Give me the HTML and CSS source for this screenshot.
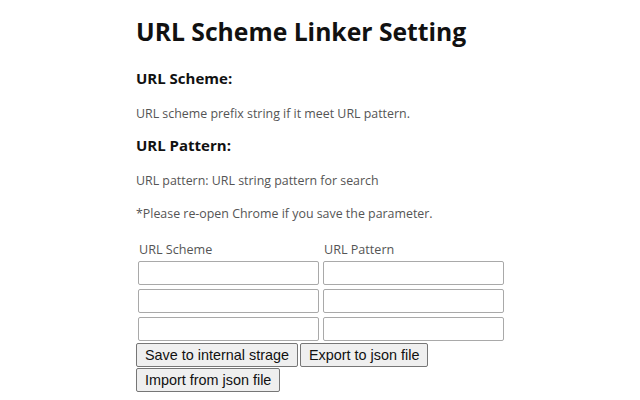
FILE: index.html
```html
<!DOCTYPE html>
<html>
<head>
<meta charset="utf-8">
<link rel="stylesheet" href="styles.css">
</head>
<body>
<div class="container">
  <h1 class="title">URL Scheme Linker Setting</h1>
  <h3 class="section">URL Scheme:</h3>
  <p class="desc first">URL scheme prefix string if it meet URL pattern.</p>
  <h3 class="section">URL Pattern:</h3>
  <p class="desc">URL pattern: URL string pattern for search</p>
  <p class="desc">*Please re-open Chrome if you save the parameter.</p>
  <table class="grid">
    <tr><th class="head">URL Scheme</th><th class="head">URL Pattern</th></tr>
    <tr><td class="cell"><input class="field" type="text"></td><td class="cell"><input class="field" type="text"></td></tr>
    <tr><td class="cell"><input class="field" type="text"></td><td class="cell"><input class="field" type="text"></td></tr>
    <tr><td class="cell"><input class="field" type="text"></td><td class="cell"><input class="field" type="text"></td></tr>
  </table>
  <div class="actions">
    <div class="row">
      <button class="btn">Save to internal strage</button>
      <button class="btn">Export to json file</button>
    </div>
    <div class="row">
      <button class="btn">Import from json file</button>
    </div>
  </div>
</div>
</body>
</html>
```

FILE: styles.css
```css
html, body {
  margin: 0;
  padding: 0;
  background: #ffffff;
}
body {
  font-family: "Open Sans", "Noto Sans", sans-serif;
  font-size: 12.4px;
  color: #555555;
}
.container {
  width: 368px;
  margin: 0 auto;
}
.title {
  font-size: 24.7px;
  font-weight: 700;
  color: #111111;
  margin: 14px 0 18px 0;
  line-height: 36px;
}
.section {
  font-size: 15px;
  font-weight: 700;
  color: #111111;
  margin: 0;
  line-height: 20px;
}
.desc {
  margin: 17px 0 14px 0;
  line-height: 18px;
}
.desc.first {
  margin-bottom: 12px;
}
.desc + .desc {
  margin-top: 15px;
}
.grid {
  border-spacing: 2px;
  margin-left: -1px;
  margin-top: 16px;
}
.head {
  text-align: left;
  font-weight: 400;
  font-size: 12.6px;
  line-height: 17px;
  padding: 0 2px;
  color: #555555;
}
.cell {
  padding: 1px;
}
.field {
  width: 181px;
  height: 24px;
  box-sizing: border-box;
  border: 1px solid #a9a9a9;
  border-radius: 2px;
  margin: 0;
  display: block;
}
.actions {
  display: flex;
  flex-direction: column;
  gap: 1px;
  margin-top: -1px;
}
.row {
  display: flex;
  gap: 2px;
}
.btn {
  font-family: "Liberation Sans", Arial, sans-serif;
  font-size: 14.4px;
  height: 24px;
  padding: 0 8px;
  margin: 0;
  background: #efefef;
  border: 1px solid #767676;
  border-radius: 2px;
  color: #111;
}
```
